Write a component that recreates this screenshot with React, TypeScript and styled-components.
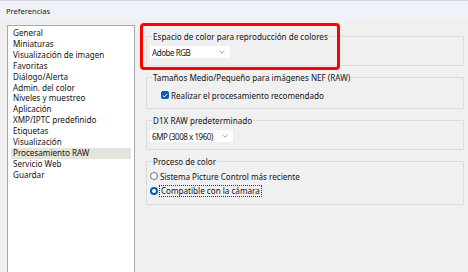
import styled, { createGlobalStyle } from "styled-components";

const GlobalStyle = createGlobalStyle`
  html, body {
    margin: 0;
    padding: 0;
    background: #f0f0f0;
    overflow: hidden;
  }
  body {
    font-family: "Noto Sans", "Open Sans", sans-serif;
    font-size: 8.1px;
    color: #141414;
  }
`;

const categories = [
  "General",
  "Miniaturas",
  "Visualización de imagen",
  "Favoritas",
  "Diálogo/Alerta",
  "Admin. del color",
  "Niveles y muestreo",
  "Aplicación",
  "XMP/IPTC predefinido",
  "Etiquetas",
  "Visualización",
  "Procesamiento RAW",
  "Servicio Web",
  "Guardar",
];

const Window = styled.div`
  width: 468px;
  height: 272px;
  display: flex;
  flex-direction: column;
  background: #f0f0f0;
  overflow: hidden;
`;

const TitleBar = styled.div`
  height: 19px;
  flex: none;
  display: flex;
  align-items: center;
  padding-left: 6px;
  background: #eff2f8;
  border-top: 1px solid #d4d6da;
  font-size: 7.6px;
  color: #222;
`;

const Body = styled.div`
  flex: 1;
  display: flex;
  gap: 11px;
  padding: 5px 4px 0 7px;
`;

const CategoryList = styled.ul`
  list-style: none;
  margin: 0;
  width: 120px;
  padding: 2px 3px 0 3px;
  background: #fff;
  border: 1px solid #a8a8a8;
  border-bottom: none;
`;

const CategoryItem = styled.li<{ $active?: boolean }>`
  height: 10.92px;
  line-height: 10.92px;
  padding-left: 2px;
  white-space: nowrap;
  background: ${(p) => (p.$active ? "#e4e4da" : "transparent")};
`;

const Settings = styled.div`
  flex: 1;
  display: flex;
  flex-direction: column;
  gap: 6px;
  padding-top: 6px;
`;

const Group = styled.fieldset<{ $height: number }>`
  position: relative;
  margin: 0;
  height: ${(p) => p.$height}px;
  box-sizing: border-box;
  padding: 0 0 0 3px;
  border: 1px solid #dcdcdc;
  border-radius: 1px;
`;

const Legend = styled.legend`
  padding: 0 1px;
  margin-left: 2px;
  line-height: 11px;
  white-space: nowrap;
`;

const Highlight = styled.div`
  position: absolute;
  left: -7px;
  top: -19px;
  width: 194px;
  height: 41px;
  border: 3px solid #f00;
  border-radius: 4px;
  pointer-events: none;
`;

const Select = styled.div<{ $width: number }>`
  width: ${(p) => p.$width}px;
  height: 12px;
  margin-top: 4px;
  box-sizing: border-box;
  display: grid;
  grid-template-columns: 1fr auto;
  align-items: center;
  padding: 0 5px 0 2px;
  background: #fff;
  border-radius: 1px;
  white-space: nowrap;
  font-size: 8px;
  letter-spacing: -0.45px;

  svg {
    display: block;
  }
`;

const Row = styled.label<{ $indent?: number; $top?: number }>`
  display: flex;
  align-items: center;
  gap: 2px;
  height: 12px;
  margin-left: ${(p) => p.$indent ?? 0}px;
  margin-top: ${(p) => p.$top ?? 3}px;
  white-space: nowrap;
`;

const Check = styled.span`
  width: 8px;
  height: 8px;
  border-radius: 2px;
  background: #005fb8;
  display: flex;
  align-items: center;
  justify-content: center;
`;

const Radio = styled.span<{ $on?: boolean }>`
  width: 8px;
  height: 8px;
  box-sizing: border-box;
  border-radius: 50%;
  background: #fff;
  border: ${(p) => (p.$on ? "2.5px solid #005fb8" : "1px solid #6f6f6f")};
`;

const Focus = styled.span`
  outline: 1px dotted #333;
  outline-offset: 0;
  padding: 0 1px;
  line-height: 10px;
`;

const Chevron = () => (
  <svg width="6" height="4" viewBox="0 0 6 4">
    <path d="M0.5 0.8 L3 3.2 L5.5 0.8" fill="none" stroke="#888" strokeWidth="0.8" />
  </svg>
);

export default function App() {
  return (
    <>
      <GlobalStyle />
      <Window>
        <TitleBar>Preferencias</TitleBar>
        <Body>
          <CategoryList>
            {categories.map((c) => (
              <CategoryItem key={c} $active={c === "Procesamiento RAW"}>
                {c}
              </CategoryItem>
            ))}
          </CategoryList>
          <Settings>
            <Group $height={35}>
              <Legend>Espacio de color para reproducción de colores</Legend>
              <Select $width={80}>
                <span>Adobe RGB</span>
                <Chevron />
              </Select>
              <Highlight />
            </Group>
            <Group $height={37}>
              <Legend>Tamaños Medio/Pequeño para imágenes NEF (RAW)</Legend>
              <Row $indent={11} $top={6}>
                <Check>
                  <svg width="6" height="5" viewBox="0 0 6 5">
                    <path d="M0.8 2.6 L2.3 4 L5.2 0.9" fill="none" stroke="#fff" strokeWidth="1" />
                  </svg>
                </Check>
                <span>Realizar el procesamiento recomendado</span>
              </Row>
            </Group>
            <Group $height={35}>
              <Legend>D1X RAW predeterminado</Legend>
              <Select $width={83}>
                <span>6MP (3008 x 1960)</span>
                <Chevron />
              </Select>
            </Group>
            <Group $height={49}>
              <Legend>Proceso de color</Legend>
              <Row>
                <Radio />
                <span>Sistema Picture Control más reciente</span>
              </Row>
              <Row>
                <Radio $on />
                <Focus>Compatible con la cámara</Focus>
              </Row>
            </Group>
          </Settings>
        </Body>
      </Window>
    </>
  );
}
